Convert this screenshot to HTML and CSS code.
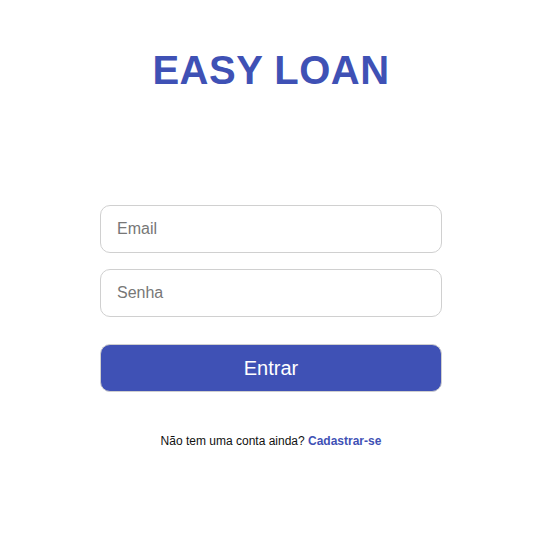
FILE: index.html
```html
<!DOCTYPE html>
<html lang="pt">
<head>
<meta charset="utf-8">
<title>Easy Loan</title>
<link rel="stylesheet" href="styles.css">
</head>
<body>
<main class="page">
  <h1 class="brand">EASY LOAN</h1>
  <form class="login">
    <input class="field" type="email" placeholder="Email">
    <input class="field" type="password" placeholder="Senha">
    <button class="submit" type="button">Entrar</button>
  </form>
  <p class="signup">Não tem uma conta ainda? <a href="#" class="signup-link">Cadastrar-se</a></p>
</main>
</body>
</html>
```
FILE: styles.css
```css
* { box-sizing: border-box; }
html, body { margin: 0; padding: 0; background: #fff; }
body { font-family: "Liberation Sans", Arial, sans-serif; }
.page {
  width: 342px;
  margin: 0 auto;
  padding-top: 47px;
  display: flex;
  flex-direction: column;
}
.brand {
  margin: 0;
  font-size: 40px;
  font-weight: 700;
  line-height: 46px;
  color: #3f51b5;
  text-align: center;
  letter-spacing: 0.5px;
}
.login {
  margin-top: 112px;
  display: flex;
  flex-direction: column;
  gap: 16px;
}
.field {
  height: 48px;
  width: 100%;
  border: 1px solid #d0d0d0;
  border-radius: 10px;
  padding: 0 16px;
  font-family: inherit;
  font-size: 16px;
  color: #333;
  outline: none;
}
.field::placeholder { color: #777; }
.submit {
  margin-top: 11px;
  height: 48px;
  width: 100%;
  border: 1px solid #cfcfcf;
  border-radius: 10px;
  background: #3f51b5;
  color: #fff;
  font-family: inherit;
  font-size: 20px;
}
.signup {
  margin: 42px 0 0;
  text-align: center;
  font-size: 12px;
  line-height: 14px;
  color: #111;
}
.signup-link {
  color: #3f51b5;
  font-weight: 700;
  text-decoration: none;
}
```
